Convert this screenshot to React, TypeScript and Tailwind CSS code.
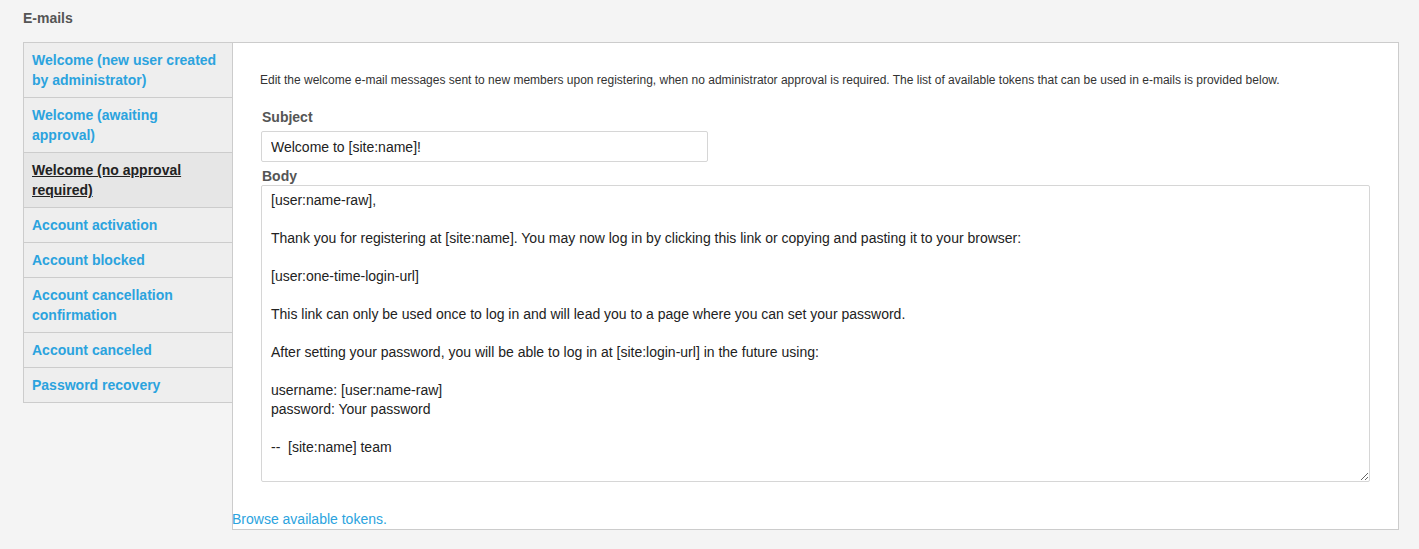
import React from "react";

const items = [
  { label: "Welcome (new user created by administrator)", active: false },
  { label: "Welcome (awaiting approval)", active: false },
  { label: "Welcome (no approval required)", active: true },
  { label: "Account activation", active: false },
  { label: "Account blocked", active: false },
  { label: "Account cancellation confirmation", active: false },
  { label: "Account canceled", active: false },
  { label: "Password recovery", active: false },
];

const body = `[user:name-raw],

Thank you for registering at [site:name]. You may now log in by clicking this link or copying and pasting it to your browser:

[user:one-time-login-url]

This link can only be used once to log in and will lead you to a page where you can set your password.

After setting your password, you will be able to log in at [site:login-url] in the future using:

username: [user:name-raw]
password: Your password

--  [site:name] team`;

export default function App() {
  return (
    <div
      className="min-h-[549px] w-full bg-[#f4f4f4] pl-[23px] pt-[10px] pb-[19px] text-[#222]"
      style={{ fontFamily: '"Liberation Sans", Arial, Helvetica, sans-serif' }}
    >
      <h2 className="text-[14px] font-bold leading-[16px] text-[#555]">E-mails</h2>
      <div className="mt-[16px] flex items-start">
        <ul className="w-[210px] shrink-0 border border-b-0 border-[#cccccc] bg-[#eeeeee]">
          {items.map((it) => (
            <li
              key={it.label}
              className={
                it.active
                  ? "border-b border-[#cccccc] bg-[#e6e6e6] py-[7px] pl-[8px] pr-[12px] text-[14px] font-bold leading-[20px] text-[#222] underline"
                  : "border-b border-[#cccccc] py-[7px] pl-[8px] pr-[12px] text-[14px] font-bold leading-[20px] text-[#2ba3de]"
              }
            >
              {it.label}
            </li>
          ))}
        </ul>
        <div className="-ml-px flex h-[488px] w-[1167px] flex-col border border-[#cccccc] bg-white">
          <div className="pl-[28px] pr-[27px] pt-[29px]">
            <p className="-ml-px text-[12px] leading-[16px] text-[#333]">
              Edit the welcome e-mail messages sent to new members upon registering, when no administrator approval is required. The list of available tokens that can be used in e-mails is provided below.
            </p>
            <div className="mt-[20px] pl-[1px] text-[14px] font-bold leading-[18px] text-[#555]">Subject</div>
            <input
              readOnly
              value="Welcome to [site:name]!"
              className="mt-[5px] block h-[31px] w-[447px] rounded-[2px] border border-[#d6d6d6] bg-white px-[9px] text-[14px] text-[#222] outline-none"
            />
            <div className="mt-[5px] pl-[1px] text-[14px] font-bold leading-[18px] text-[#555]">Body</div>
            <textarea
              readOnly
              value={body}
              className="block h-[297px] w-[1109px] resize-y rounded-[2px] border border-[#d6d6d6] bg-white px-[9px] pt-[5px] text-[14px] leading-[19px] text-[#222] outline-none"
            />
          </div>
          <div className="-ml-px mt-[28px] text-[14px] leading-[18px] text-[#2ba3de]">Browse available tokens.</div>
        </div>
      </div>
    </div>
  );
}
